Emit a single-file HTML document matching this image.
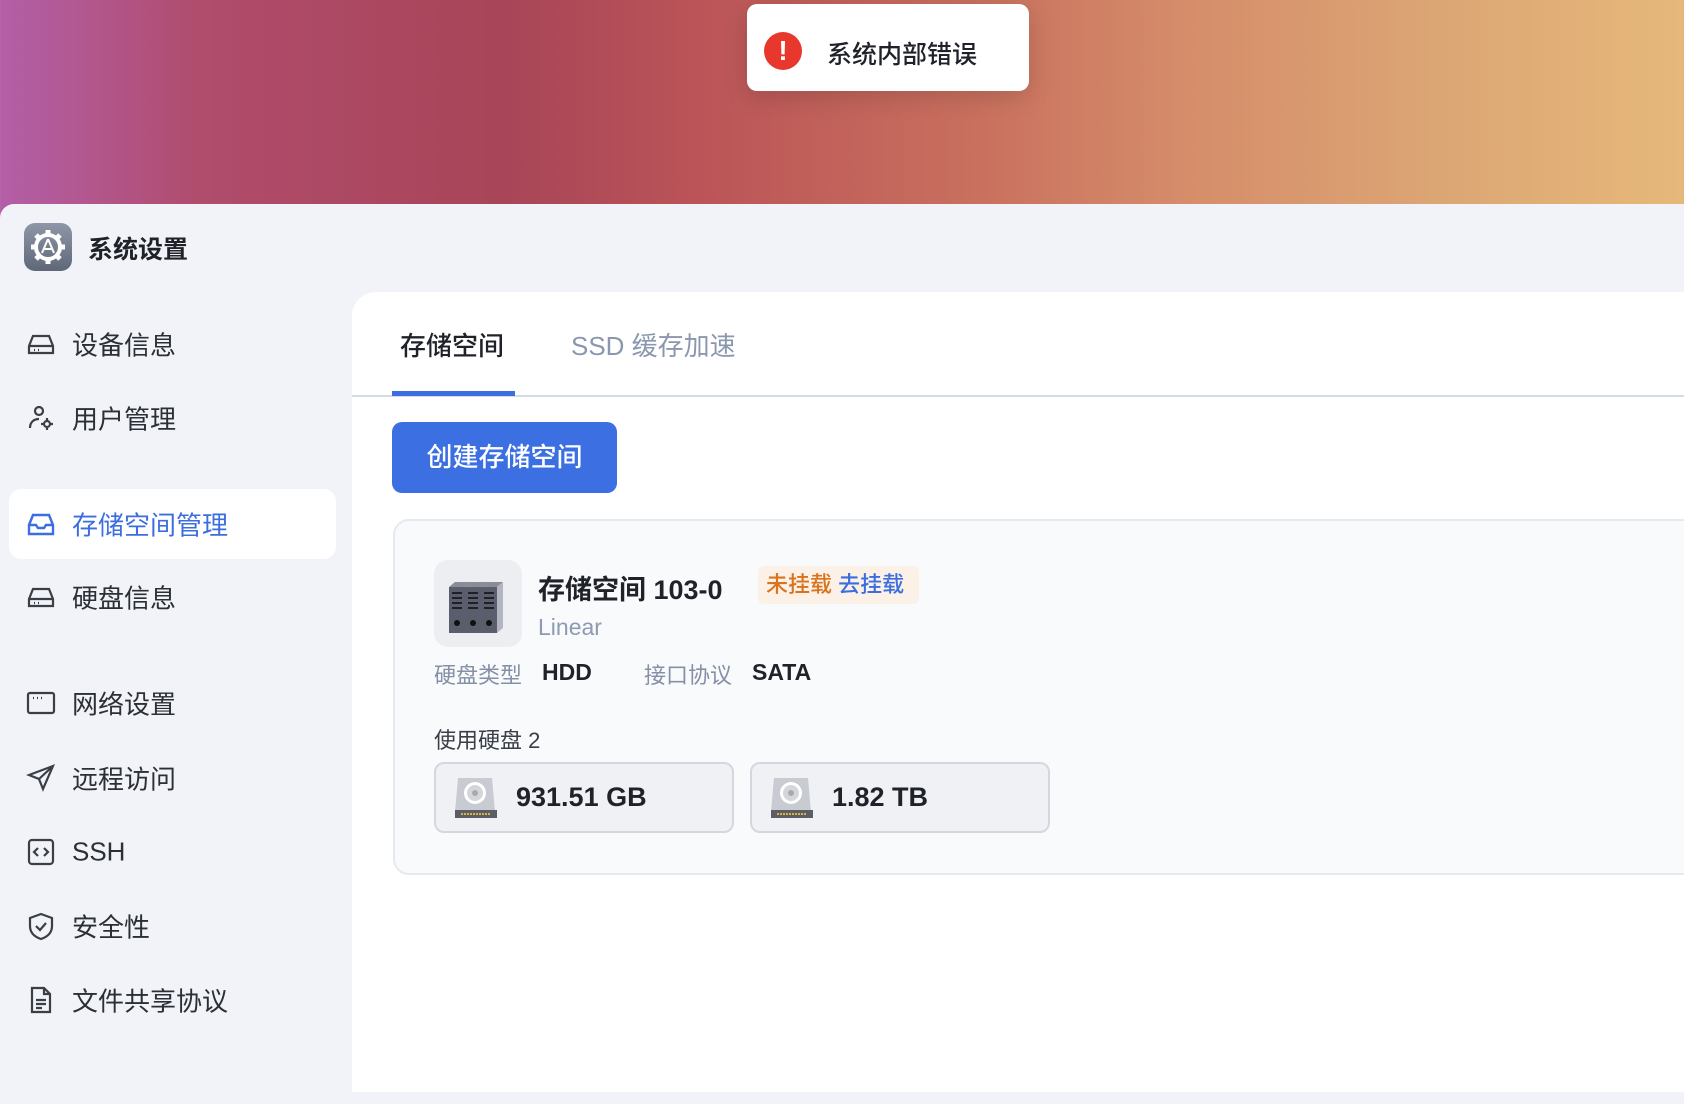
<!DOCTYPE html>
<html><head><meta charset="utf-8"><style>
*{margin:0;padding:0;box-sizing:border-box}
body{width:1684px;height:1042px;overflow:hidden;position:relative;font-family:"Liberation Sans","Noto Sans CJK SC",sans-serif;color:#1f2329;
background:linear-gradient(90deg,#b35fa8 0%,#b04c6c 12%,#a84558 30%,#bb5558 42%,#c9705e 58%,#d58c6a 70%,#dca574 85%,#e6b87a 100%)}
.win{position:absolute;left:0;top:204px;width:1720px;height:900px;background:#f1f3f8;border-top-left-radius:14px}
.toast{position:absolute;left:747px;top:4px;width:282px;height:87px;background:#fff;border-radius:10px;box-shadow:0 6px 24px rgba(0,0,0,.15)}
.toast .ic{position:absolute;left:17px;top:28px;width:38px;height:38px;border-radius:50%;background:#e8372c;color:#fff;font-weight:bold;font-size:28px;text-align:center;line-height:38px}
.toast span{position:absolute;left:80px;top:31px;font-size:25px;font-weight:500}
.abs{position:absolute}
.menu{position:absolute;left:72px;font-size:26px;color:#2b2f36;transform:translateY(-50%)}
.mi{position:absolute;left:26px;width:30px;height:30px;transform:translateY(-50%)}
.panel{position:absolute;left:352px;top:292px;width:1400px;height:800px;background:#fff;border-top-left-radius:24px}
.card{position:absolute;left:393px;top:519px;width:1400px;height:356px;background:#f9fafc;border:2px solid #e6e9ef;border-radius:16px}
.disk{position:absolute;top:762px;width:300px;height:71px;background:#eff1f5;border:2px solid #d3d8e0;border-radius:10px}
.disk span{position:absolute;left:80px;top:18px;font-size:27px;font-weight:bold;color:#1f2329}
.disk svg{position:absolute;left:17px;top:12px}
</style></head><body>
<div class="win"></div>
<div class="toast"><div class="ic">!</div><span>系统内部错误</span></div>

<div class="abs" style="left:24px;top:223px;width:48px;height:48px;border-radius:11px;background:linear-gradient(#8d97a8,#5f6878)">
<svg width="48" height="48" viewBox="0 0 48 48"><g fill="none" stroke="#fff" stroke-width="4"><circle cx="24" cy="24" r="12"/></g><g stroke="#fff" stroke-width="5"><path d="M24 7v6M24 35v6M7 24h6M35 24h6M12 12l4 4M32 32l4 4M36 12l-4 4M12 36l4-4"/></g><path d="M24 16l-6 14M24 16l6 14M20 26h8" stroke="#fff" stroke-width="2" fill="none"/></svg></div>
<div class="abs" style="left:88px;top:230px;font-size:25px;font-weight:bold">系统设置</div>

<div class="abs" style="left:9px;top:489px;width:327px;height:70px;background:#fff;border-radius:12px"></div>

<svg class="mi" style="top:344px" viewBox="0 0 30 30" fill="none" stroke="#3a3f47" stroke-width="2.2"><path d="M3 17l4-10h16l4 10v7H3z M3 17h24"/><path d="M8 21h1M12 21h1"/></svg>
<div class="menu" style="top:344px">设备信息</div>
<svg class="mi" style="top:418px" viewBox="0 0 30 30" fill="none" stroke="#3a3f47" stroke-width="2.2"><circle cx="13" cy="8" r="4"/><path d="M4 25c0-6 4-9 9-9"/><circle cx="21" cy="21" r="3"/><path d="M21 15v2M21 25v2M15 21h2M25 21h2"/></svg>
<div class="menu" style="top:418px">用户管理</div>
<svg class="mi" style="top:524px" viewBox="0 0 30 30" fill="none" stroke="#3c6ee0" stroke-width="2.4"><path d="M3 16l4-10h16l4 10v9H3z"/><path d="M3 16h7l2 3h6l2-3h7"/></svg>
<div class="menu" style="top:524px;color:#3c6ee0">存储空间管理</div>
<svg class="mi" style="top:597px" viewBox="0 0 30 30" fill="none" stroke="#3a3f47" stroke-width="2.2"><path d="M3 17l4-10h16l4 10v7H3z M3 17h24"/><path d="M8 21h1M12 21h1"/></svg>
<div class="menu" style="top:597px">硬盘信息</div>
<svg class="mi" style="top:703px" viewBox="0 0 30 30" fill="none" stroke="#3a3f47" stroke-width="2.2"><rect x="2" y="5" width="26" height="20" rx="2"/><path d="M7 10h1M11 10h1M15 10h1"/></svg>
<div class="menu" style="top:703px">网络设置</div>
<svg class="mi" style="top:778px" viewBox="0 0 30 30" fill="none" stroke="#3a3f47" stroke-width="2.2"><path d="M27 3L3 12l10 4 4 10z M27 3L13 16"/></svg>
<div class="menu" style="top:778px">远程访问</div>
<svg class="mi" style="top:852px" viewBox="0 0 30 30" fill="none" stroke="#3a3f47" stroke-width="2.2"><rect x="3" y="3" width="24" height="24" rx="3"/><path d="M12 11l-4 4 4 4M18 11l4 4-4 4"/></svg>
<div class="menu" style="top:852px">SSH</div>
<svg class="mi" style="top:926px" viewBox="0 0 30 30" fill="none" stroke="#3a3f47" stroke-width="2.2"><path d="M15 3l11 4v8c0 7-5 11-11 13C9 26 4 22 4 15V7z"/><path d="M10 15l4 4 6-7"/></svg>
<div class="menu" style="top:926px">安全性</div>
<svg class="mi" style="top:1000px" viewBox="0 0 30 30" fill="none" stroke="#3a3f47" stroke-width="2.2"><path d="M6 3h12l6 6v18H6z M18 3v6h6"/><path d="M10 15h10M10 19h10M10 23h6"/></svg>
<div class="menu" style="top:1000px">文件共享协议</div>

<div class="panel"></div>
<div class="abs" style="left:400px;top:326px;font-size:26px;font-weight:500;color:#1f2329">存储空间</div>
<div class="abs" style="left:571px;top:326px;font-size:26px;color:#8b97ad">SSD 缓存加速</div>
<div class="abs" style="left:352px;top:395px;width:1400px;height:2px;background:#d3dbe5"></div>
<div class="abs" style="left:392px;top:391px;width:123px;height:5px;background:#3c6ee0"></div>

<div class="abs" style="left:392px;top:422px;width:225px;height:71px;background:#3c6fe1;border-radius:10px;color:#fff;font-size:26px;text-align:center;line-height:71px;font-weight:500">创建存储空间</div>

<div class="card"></div>
<div class="abs" style="left:434px;top:560px;width:88px;height:87px;background:#eceef2;border-radius:14px">
<svg width="88" height="87" viewBox="0 0 88 87"><g transform="translate(-2,0)"><path d="M17 27h16v46H17z" fill="#5a5d6c"/><path d="M17 27l6-5h16l-6 5z" fill="#8a8d99"/><path d="M33 27l6-5v46l-6 5z" fill="#9b9eaa"/>
<path d="M33 27h16v46H33z" fill="#5a5d6c"/><path d="M33 27l6-5h16l-6 5z" fill="#8a8d99"/><path d="M49 27l6-5v46l-6 5z" fill="#9b9eaa"/>
<path d="M49 27h16v46H49z" fill="#5a5d6c"/><path d="M49 27l6-5h16l-6 5z" fill="#8a8d99"/><path d="M65 27l6-5v46l-6 5z" fill="#b3b5bf"/>
<g stroke="#1f2028" stroke-width="2"><path d="M20 33h10M20 38h10M20 43h10M20 48h10M36 33h10M36 38h10M36 43h10M36 48h10M52 33h10M52 38h10M52 43h10M52 48h10"/></g>
<circle cx="25" cy="63" r="3" fill="#111"/><circle cx="41" cy="63" r="3" fill="#111"/><circle cx="57" cy="63" r="3" fill="#111"/></g></svg></div>
<div class="abs" style="left:538px;top:568px;font-size:27px;font-weight:bold">存储空间 103-0</div>
<div class="abs" style="left:758px;top:566px;width:161px;height:38px;background:#fcf1e7;border-radius:6px;font-size:22px;line-height:38px;padding-left:8px;font-weight:500"><span style="color:#d9731c">未挂载</span> <span style="color:#3c6ee0">去挂载</span></div>
<div class="abs" style="left:538px;top:614px;font-size:23px;color:#8d9ab0">Linear</div>
<div class="abs" style="left:434px;top:658px;font-size:22px;color:#8590a6">硬盘类型</div>
<div class="abs" style="left:542px;top:659px;font-size:23px;font-weight:bold">HDD</div>
<div class="abs" style="left:644px;top:658px;font-size:22px;color:#8590a6">接口协议</div>
<div class="abs" style="left:752px;top:659px;font-size:23px;font-weight:bold">SATA</div>
<div class="abs" style="left:434px;top:723px;font-size:22px;color:#3a3f47">使用硬盘 2</div>

<div class="disk" style="left:434px"><svg width="46" height="44" viewBox="0 0 46 44"><path d="M5 2h34l3 34H2z" fill="#c8cbd2"/><circle cx="22" cy="17" r="11" fill="#fff"/><circle cx="22" cy="17" r="8" fill="#d4d6dc"/><circle cx="22" cy="17" r="3" fill="#aaa"/><rect x="2" y="34" width="42" height="8" fill="#5b5e66"/><path d="M8 38h30" stroke="#e0b23a" stroke-width="2" stroke-dasharray="2 1"/></svg><span>931.51 GB</span></div>
<div class="disk" style="left:750px"><svg width="46" height="44" viewBox="0 0 46 44"><path d="M5 2h34l3 34H2z" fill="#c8cbd2"/><circle cx="22" cy="17" r="11" fill="#fff"/><circle cx="22" cy="17" r="8" fill="#d4d6dc"/><circle cx="22" cy="17" r="3" fill="#aaa"/><rect x="2" y="34" width="42" height="8" fill="#5b5e66"/><path d="M8 38h30" stroke="#e0b23a" stroke-width="2" stroke-dasharray="2 1"/></svg><span>1.82 TB</span></div>
</body></html>
